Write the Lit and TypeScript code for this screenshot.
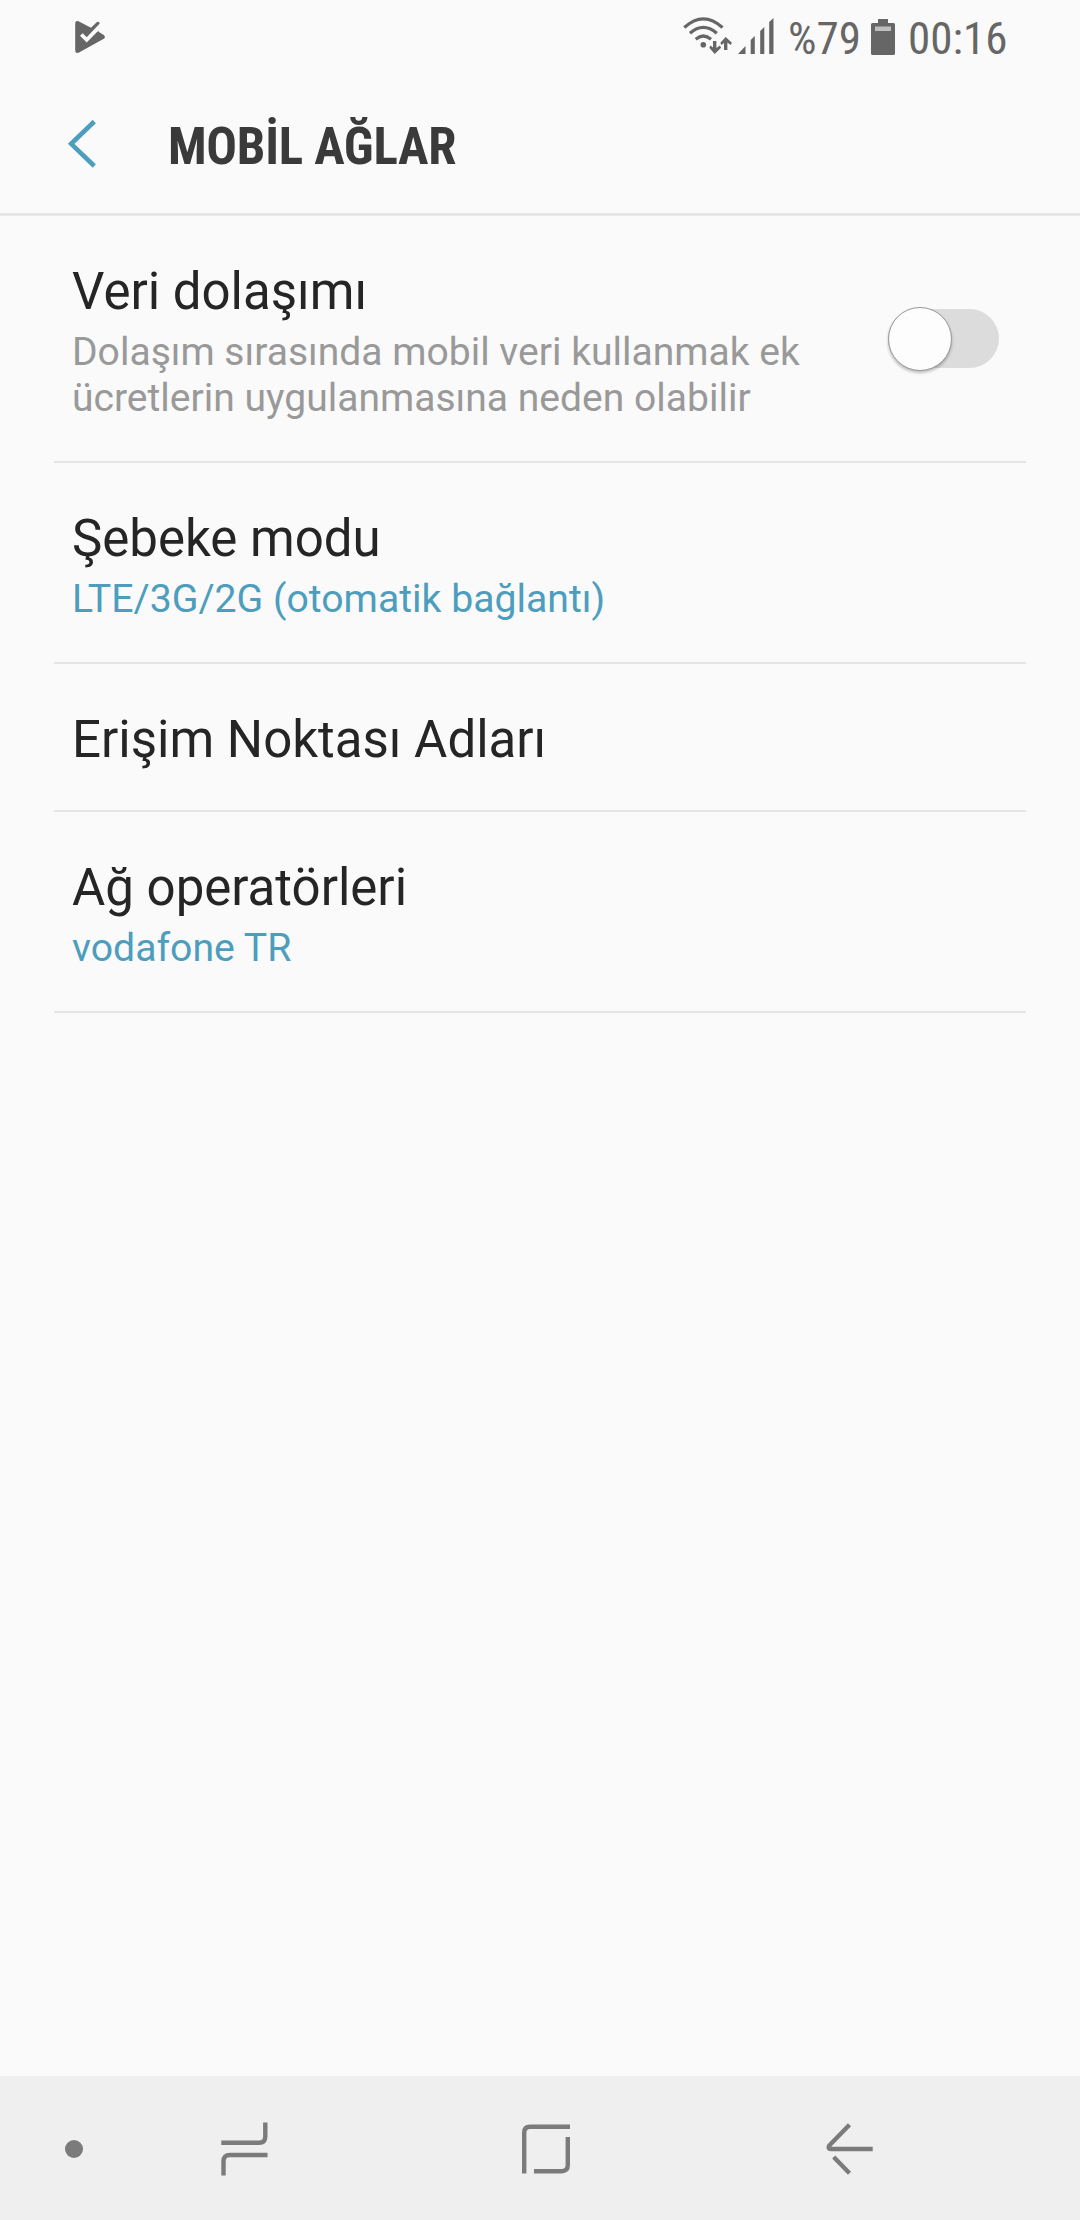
import { LitElement, html, css, svg, nothing } from "lit";
import { customElement, property } from "lit/decorators.js";

interface Setting {
  title: string;
  summary?: string;
  muted?: boolean;
  toggle?: boolean;
}

const SETTINGS: Setting[] = [
  {
    title: "Veri dolaşımı",
    summary: "Dolaşım sırasında mobil veri kullanmak ek ücretlerin uygulanmasına neden olabilir",
    muted: true,
    toggle: true,
  },
  { title: "Şebeke modu", summary: "LTE/3G/2G (otomatik bağlantı)" },
  { title: "Erişim Noktası Adları" },
  { title: "Ağ operatörleri", summary: "vodafone TR" },
];

const SIGNAL_BARS = [
  "M0 36 L7.5 28 V36 Z",
  "M12.7 36 V22 L16.8 18 V36 Z",
  "M22.2 36 V13 L26.3 9 V36 Z",
  "M31.2 36 V4 L35.5 0 V36 Z",
];

@customElement("status-bar")
export class StatusBar extends LitElement {
  static styles = css`
    :host {
      display: flex;
      justify-content: space-between;
      height: 72px;
      padding: 0 75px;
      color: #666;
    }
    .icon { display: block; flex: none; }
    .play { margin-top: 20px; }
    .right { display: flex; }
    .wifi { margin-top: 17px; }
    .signal { margin: 18px 0 0 6px; }
    .battery { margin: 19px 0 0 13px; }
    .text {
      font: 400 45px/53px "Roboto Condensed", Roboto, sans-serif;
      font-stretch: condensed;
      margin-top: 12px;
      white-space: nowrap;
    }
    .percent { margin-left: 14px; width: 70px; }
    .clock { margin-left: 13px; width: 97px; }
  `;

  render() {
    return html`
      <svg class="icon play" width="32" height="34" viewBox="0 0 32 34">
        <path fill="#666" d="M0.2 4 Q0.2 0 3.5 1.2 L16 7.7 L22 2 Q23.3 1 24.7 3 L23.5 11.8 L28.8 15 Q31 17 28.8 18.8 L4 32.5 Q0.2 34 0.2 30 Z" />
        <path fill="#fafafa" d="M5 15.7 L7.7 13.3 L11.7 17.3 L25 3.2 L30 6 L22 12 L11.7 22.5 Z" />
      </svg>
      <div class="right">
        <svg class="icon wifi" width="49" height="37" viewBox="0 0 49 37">
          <g fill="none" stroke="#666" stroke-width="3.2">
            <path d="M1.3 10.5 Q20.3 -6.8 39.5 10.5" />
            <path d="M7 16.3 Q20.3 4.5 33.8 16.3" />
            <path d="M12.7 22.2 Q20.3 15.8 28 22.2" />
          </g>
          <circle cx="20.3" cy="27.7" r="2.8" fill="#666" />
          <path fill="#666" d="M30 24 h3.4 v7 l3.5 -2.5 l1.2 2.2 L31.7 37 L26.3 30.7 l1.2 -2.2 l2.5 2 Z" />
          <path fill="#666" d="M41 33 h3.4 v-7.5 l3.3 2.5 l1.2 -2.2 L42.7 20 L37.3 25.8 l1.2 2.2 l2.5 -2 Z" />
        </svg>
        <svg class="icon signal" width="36" height="36" viewBox="0 0 36 36">
          ${SIGNAL_BARS.map((d) => svg`<path fill="#666" d=${d} />`)}
        </svg>
        <span class="text percent">%79</span>
        <svg class="icon battery" width="24" height="36" viewBox="0 0 24 36">
          <path fill="#666" d="M7 0 H17 V4 H22.5 Q24 4 24 5.5 V34.5 Q24 36 22.5 36 H1.5 Q0 36 0 34.5 V5.5 Q0 4 1.5 4 H7 Z" />
          <path fill="#bebebe" d="M4 7.5 H20 V12 H4 Z" />
        </svg>
        <span class="text clock">00:16</span>
      </div>
    `;
  }
}

@customElement("title-bar")
export class TitleBar extends LitElement {
  static styles = css`
    :host {
      display: flex;
      height: 141px;
      border-bottom: 3px solid #e6e6e6;
    }
    .back { display: block; flex: none; margin: 47px 0 0 67px; }
    .title {
      margin: 44px 0 0 70px;
      font: 700 51px/61px "Roboto Condensed", Roboto, sans-serif;
      font-stretch: condensed;
      letter-spacing: -0.3px;
      color: #3a3a3a;
      white-space: nowrap;
    }
  `;

  render() {
    return html`
      <svg class="back" width="31" height="50" viewBox="0 0 31 50">
        <path fill="none" stroke="#4d9dbd" stroke-width="4.6" d="M27.3 2.5 L4.2 24.8 L27.3 47" />
      </svg>
      <h1 class="title">MOBİL AĞLAR</h1>
    `;
  }
}

@customElement("setting-row")
export class SettingRow extends LitElement {
  @property({ attribute: false }) setting!: Setting;

  static styles = css`
    :host {
      display: flex;
      align-items: center;
      margin: 0 54px;
      padding: 45px 27px 40px 18px;
      border-bottom: 2px solid #e5e5e5;
      font-family: Roboto, sans-serif;
    }
    .body { flex: 1; }
    .title { font-size: 51px; line-height: 61px; color: #252525; }
    .summary { width: 760px; font-size: 39.2px; line-height: 46px; color: #4d9dbd; padding-top: 7px; }
    .muted { font-size: 39.05px; color: #999; }
    .switch {
      display: flex;
      align-items: center;
      width: 111px;
      height: 59px;
      margin-bottom: 5px;
      border-radius: 30px;
      background: #dcdcdc;
    }
    .knob {
      box-sizing: border-box;
      flex: none;
      width: 64px;
      height: 64px;
      border: 1px solid #999;
      border-radius: 50%;
      background: #fdfdfd;
      box-shadow: 0 2px 3px rgba(0, 0, 0, 0.25);
    }
  `;

  render() {
    const { title, summary, muted, toggle } = this.setting;
    return html`
      <div class="body">
        <div class="title">${title}</div>
        ${summary ? html`<div class="summary ${muted ? "muted" : ""}">${summary}</div>` : nothing}
      </div>
      ${toggle ? html`<div class="switch" role="switch" aria-checked="false"><div class="knob"></div></div>` : nothing}
    `;
  }
}

@customElement("nav-bar")
export class NavBar extends LitElement {
  static styles = css`
    :host {
      display: flex;
      align-items: center;
      height: 144px;
      background: #efefef;
    }
    .icon { display: block; flex: none; fill: none; stroke: #7b7b7b; stroke-width: 4.4; }
    .dot { width: 18px; height: 18px; border-radius: 50%; background: #7b7b7b; margin: 2px 0 0 65px; }
    .recents { margin: 2px 0 0 138px; }
    .home { margin: 2px 0 0 254px; }
    .back { margin: 2px 0 0 254px; }
  `;

  render() {
    return html`
      <div class="dot"></div>
      <svg class="icon recents" width="47" height="54" viewBox="0 0 47 54">
        <path d="M0.3 20.8 H38 Q44.3 20.8 44.3 14.5 V0.5 M46.5 33 H9 Q2.5 33 2.5 39.5 V53.5" />
      </svg>
      <svg class="icon home" width="50" height="50" viewBox="0 0 50 50">
        <path d="M48 2.7 H8 Q2.2 2.7 2.2 8.5 V49.5 M45.8 13 V41 Q45.8 47.2 39.5 47.2 H12" />
      </svg>
      <svg class="icon back" width="48" height="52" viewBox="0 0 48 52">
        <path stroke-linejoin="round" d="M23.5 1.8 L3.3 22.5 Q1.5 26 4.8 26 H46.7 M7.7 34 L23.5 50.3" />
      </svg>
    `;
  }
}

@customElement("app-root")
export class AppRoot extends LitElement {
  static styles = css`
    :host {
      display: flex;
      flex-direction: column;
      height: 2220px;
      background: #fafafa;
    }
    .list { flex: 1; }
  `;

  render() {
    return html`
      <status-bar></status-bar>
      <title-bar></title-bar>
      <main class="list">
        ${SETTINGS.map((s) => html`<setting-row .setting=${s}></setting-row>`)}
      </main>
      <nav-bar></nav-bar>
    `;
  }
}
